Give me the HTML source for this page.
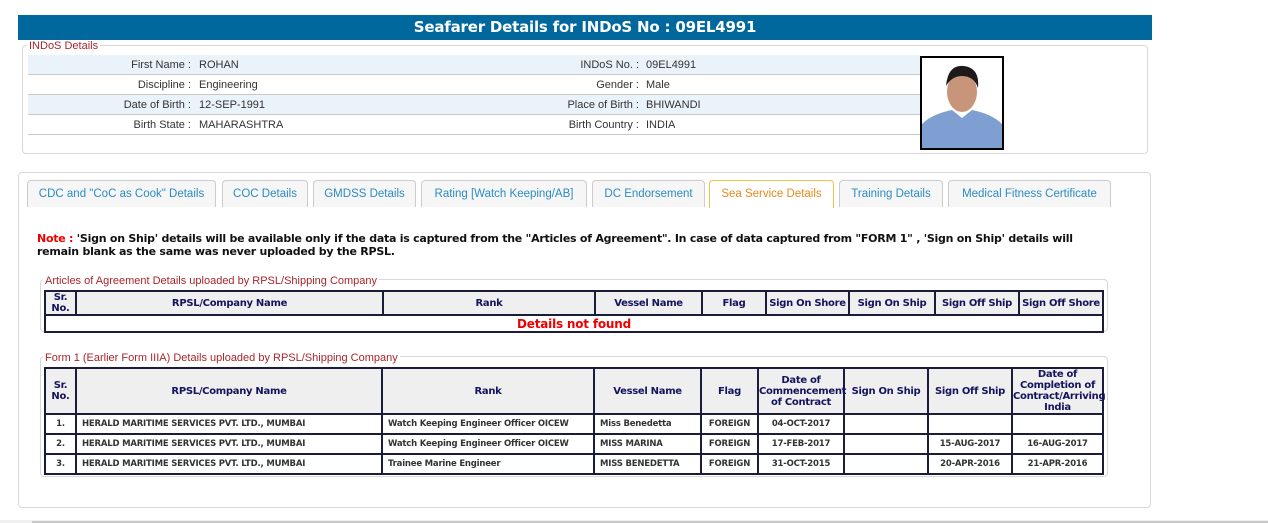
<!DOCTYPE html>
<html><head><meta charset="utf-8">
<style>
*{margin:0;padding:0;box-sizing:border-box}
body{width:1268px;height:523px;background:#fff;position:relative;overflow:hidden;font-family:"Liberation Sans",Arial,sans-serif}
.abs{position:absolute}
.hdr{left:18px;top:15px;width:1134px;height:25px;background:#00689d;color:#fff;font:bold 15px "DejaVu Sans",sans-serif;text-align:center;line-height:25px;letter-spacing:-0.2px}
.box{border:1px solid #d8d8d8;border-radius:4px}
.leg{background:#fff;color:#a8262b;font-size:11px;padding:0 2px;line-height:12px}
.row{left:28px;width:892px;height:20px;border-bottom:1px solid #c8c8c8;font-size:11px;color:#333;line-height:20px}
.row.b{background:#eaf2fa}
.row span{position:absolute;white-space:nowrap}
.l1{right:729px;text-align:right}
.v1{left:171px}
.l2{right:281px;text-align:right}
.v2{left:618px}
.tab{top:180px;height:27px;border:1px solid #ccc;border-bottom:none;border-radius:4px 4px 0 0;background:#f6f6f6;color:#2a8cc4;font-size:11.5px;text-align:center;line-height:26px}
.tab.act{background:#fff;border-color:#f0c24a;color:#e58a1b;height:28px}
.note{left:37px;top:232px;width:1060px;font:bold 11px "DejaVu Sans",sans-serif;color:#111;line-height:13px;letter-spacing:-0.25px}
table{border-collapse:collapse;position:absolute;font-family:"DejaVu Sans",sans-serif;table-layout:fixed}
td,th{border:2px solid #1b1b3a;}
th{background:#efefef;color:#14145e;font-size:10px;font-weight:bold;line-height:11px;letter-spacing:-0.3px}
td{font-size:8.5px;font-weight:bold;color:#333;height:20px;padding:0 5px;letter-spacing:-0.2px}
</style></head><body>
<div class="abs hdr">Seafarer Details for INDoS No : 09EL4991</div>
<div class="abs box" style="left:22px;top:45px;width:1126px;height:109px"></div>
<div class="abs leg" style="left:27px;top:40px">INDoS Details</div>
<div class="abs row b" style="top:55px"><span class="l1">First Name :</span><span class="v1">ROHAN</span><span class="l2">INDoS No. :</span><span class="v2">09EL4991</span></div>
<div class="abs row" style="top:75px"><span class="l1">Discipline :</span><span class="v1">Engineering</span><span class="l2">Gender :</span><span class="v2">Male</span></div>
<div class="abs row b" style="top:95px"><span class="l1">Date of Birth :</span><span class="v1">12-SEP-1991</span><span class="l2">Place of Birth :</span><span class="v2">BHIWANDI</span></div>
<div class="abs row" style="top:115px"><span class="l1">Birth State :</span><span class="v1">MAHARASHTRA</span><span class="l2">Birth Country :</span><span class="v2">INDIA</span></div>
<div class="abs" style="left:920px;top:56px;width:84px;height:94px;border:2px solid #000;background:#fff;overflow:hidden">
<svg width="80" height="90"><ellipse cx="40" cy="34" rx="15" ry="20" fill="#c9957a"/><path d="M24 28 Q26 6 42 8 Q58 10 56 30 Q52 18 40 18 Q30 18 24 28Z" fill="#1e1a1a"/><path d="M0 90 L0 66 Q10 56 30 52 L40 60 L50 52 Q70 56 80 66 L80 90Z" fill="#7f9fd2"/></svg></div>

<div class="abs box" style="left:18px;top:172px;width:1133px;height:336px"></div>
<div class="abs tab" style="left:27px;width:189px">CDC and "CoC as Cook" Details</div>
<div class="abs tab" style="left:222px;width:86px">COC Details</div>
<div class="abs tab" style="left:313px;width:103px">GMDSS Details</div>
<div class="abs tab" style="left:421px;width:166px">Rating [Watch Keeping/AB]</div>
<div class="abs tab" style="left:592px;width:113px">DC Endorsement</div>
<div class="abs tab act" style="left:709px;width:125px">Sea Service Details</div>
<div class="abs tab" style="left:839px;width:104px">Training Details</div>
<div class="abs tab" style="left:948px;width:163px">Medical Fitness Certificate</div>

<div class="abs note"><span style="color:#e00">Note : </span>'Sign on Ship' details will be available only if the data is captured from the "Articles of Agreement". In case of data captured from "FORM 1" , 'Sign on Ship' details will remain blank as the same was never uploaded by the RPSL.</div>

<div class="abs box" style="left:40px;top:279px;width:1068px;height:53px"></div>
<div class="abs leg" style="left:43px;top:275px">Articles of Agreement Details uploaded by RPSL/Shipping Company</div>
<table style="left:44px;top:290px;width:1060px">
<colgroup><col style="width:31px"><col style="width:307px"><col style="width:212px"><col style="width:107px"><col style="width:64px"><col style="width:83px"><col style="width:86px"><col style="width:84px"><col style="width:84px"></colgroup>
<tr style="height:23px"><th>Sr.<br>No.</th><th>RPSL/Company Name</th><th>Rank</th><th>Vessel Name</th><th>Flag</th><th>Sign On Shore</th><th>Sign On Ship</th><th>Sign Off Ship</th><th>Sign Off Shore</th></tr>
<tr><td colspan="9" style="height:17px;text-align:center;color:#e00;font-size:12px;line-height:12px">Details not found</td></tr>
</table>

<div class="abs box" style="left:40px;top:356px;width:1068px;height:121px"></div>
<div class="abs leg" style="left:43px;top:352px">Form 1 (Earlier Form IIIA) Details uploaded by RPSL/Shipping Company</div>
<table style="left:44px;top:367px;width:1060px">
<colgroup><col style="width:31px"><col style="width:306px"><col style="width:212px"><col style="width:107px"><col style="width:57px"><col style="width:86px"><col style="width:84px"><col style="width:84px"><col style="width:91px"></colgroup>
<tr style="height:46px"><th>Sr.<br>No.</th><th>RPSL/Company Name</th><th>Rank</th><th>Vessel Name</th><th>Flag</th><th>Date of Commencement of Contract</th><th>Sign On Ship</th><th>Sign Off Ship</th><th>Date of Completion of Contract/Arriving India</th></tr>
<tr><td style="text-align:center">1.</td><td>HERALD MARITIME SERVICES PVT. LTD., MUMBAI</td><td>Watch Keeping Engineer Officer OICEW</td><td>Miss Benedetta</td><td style="text-align:center">FOREIGN</td><td style="text-align:center">04-OCT-2017</td><td></td><td></td><td></td></tr>
<tr><td style="text-align:center">2.</td><td>HERALD MARITIME SERVICES PVT. LTD., MUMBAI</td><td>Watch Keeping Engineer Officer OICEW</td><td>MISS MARINA</td><td style="text-align:center">FOREIGN</td><td style="text-align:center">17-FEB-2017</td><td></td><td style="text-align:center">15-AUG-2017</td><td style="text-align:center">16-AUG-2017</td></tr>
<tr><td style="text-align:center">3.</td><td>HERALD MARITIME SERVICES PVT. LTD., MUMBAI</td><td>Trainee Marine Engineer</td><td>MISS BENEDETTA</td><td style="text-align:center">FOREIGN</td><td style="text-align:center">31-OCT-2015</td><td></td><td style="text-align:center">20-APR-2016</td><td style="text-align:center">21-APR-2016</td></tr>
</table>

<div class="abs" style="left:0;top:520px;width:1268px;height:3px;background:#f0f0f0"></div>
<div class="abs" style="left:32px;top:521px;width:1236px;height:2px;background:#c8c8c8"></div>
</body></html>
